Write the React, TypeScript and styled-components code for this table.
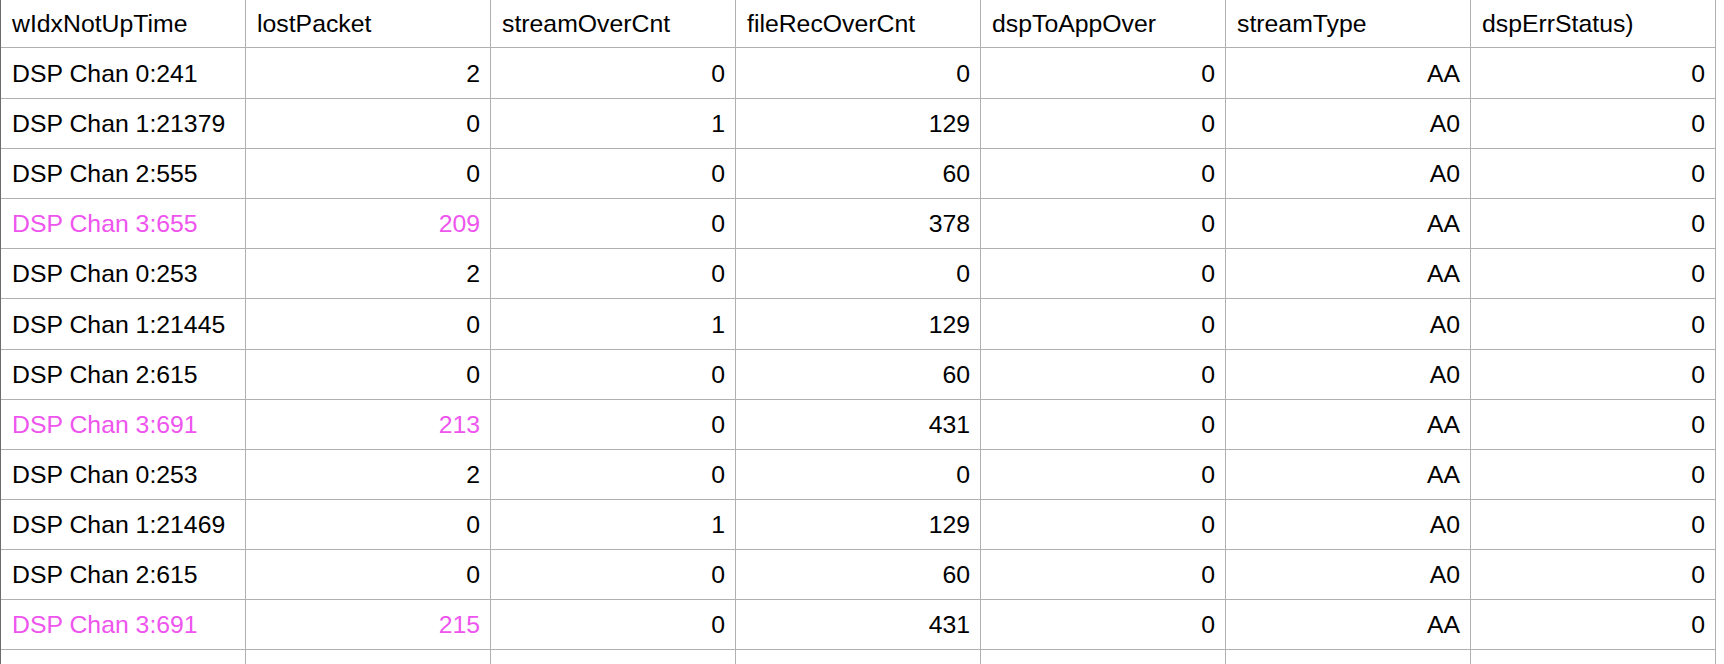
import React from "react";
import styled, { createGlobalStyle } from "styled-components";

const Global = createGlobalStyle`
  html, body { margin: 0; padding: 0; background: #fff; }
  body { font-family: "Liberation Sans", Arial, Helvetica, sans-serif; overflow: hidden; }
`;

const Sheet = styled.div`
  width: 1724px;
  height: 664px;
  overflow: hidden;
  border-left: 1px solid #6b6b6b;
  box-sizing: border-box;
  display: flex;
  flex-direction: column;
`;

const Row = styled.div<{ $h: number }>`
  display: grid;
  grid-template-columns: repeat(7, 245px) 1fr;
  height: ${(p) => p.$h}px;
  flex: none;
`;

const Cell = styled.div<{ $align?: "left" | "right"; $pink?: boolean; $last?: boolean; $noBottom?: boolean }>`
  box-sizing: border-box;
  border-right: ${(p) => (p.$last ? "none" : "1px solid #b0b0b0")};
  border-bottom: ${(p) => (p.$noBottom || p.$last ? "none" : "1px solid #b0b0b0")};
  padding: 1px 10px 0 11px;
  display: flex;
  align-items: center;
  justify-content: ${(p) => (p.$align === "right" ? "flex-end" : "flex-start")};
  font-size: 24.8px;
  color: ${(p) => (p.$pink ? "#ee55ee" : "#000")};
  white-space: nowrap;
  overflow: hidden;
`;

const headers = [
  "wIdxNotUpTime",
  "lostPacket",
  "streamOverCnt",
  "fileRecOverCnt",
  "dspToAppOver",
  "streamType",
  "dspErrStatus)",
];

type Rec = { name: string; lost: string; so: string; fr: string; da: string; st: string; err: string; pink?: boolean };

const data: Rec[] = [
  { name: "DSP Chan 0:241", lost: "2", so: "0", fr: "0", da: "0", st: "AA", err: "0" },
  { name: "DSP Chan 1:21379", lost: "0", so: "1", fr: "129", da: "0", st: "A0", err: "0" },
  { name: "DSP Chan 2:555", lost: "0", so: "0", fr: "60", da: "0", st: "A0", err: "0" },
  { name: "DSP Chan 3:655", lost: "209", so: "0", fr: "378", da: "0", st: "AA", err: "0", pink: true },
  { name: "DSP Chan 0:253", lost: "2", so: "0", fr: "0", da: "0", st: "AA", err: "0" },
  { name: "DSP Chan 1:21445", lost: "0", so: "1", fr: "129", da: "0", st: "A0", err: "0" },
  { name: "DSP Chan 2:615", lost: "0", so: "0", fr: "60", da: "0", st: "A0", err: "0" },
  { name: "DSP Chan 3:691", lost: "213", so: "0", fr: "431", da: "0", st: "AA", err: "0", pink: true },
  { name: "DSP Chan 0:253", lost: "2", so: "0", fr: "0", da: "0", st: "AA", err: "0" },
  { name: "DSP Chan 1:21469", lost: "0", so: "1", fr: "129", da: "0", st: "A0", err: "0" },
  { name: "DSP Chan 2:615", lost: "0", so: "0", fr: "60", da: "0", st: "A0", err: "0" },
  { name: "DSP Chan 3:691", lost: "215", so: "0", fr: "431", da: "0", st: "AA", err: "0", pink: true },
];

const heights = [51, 50, 50, 50, 50, 51, 50, 50, 50, 50, 50, 50];

export default function App() {
  return (
    <>
      <Global />
      <Sheet>
        <Row $h={48}>
          {headers.map((h) => (
            <Cell key={h}>{h}</Cell>
          ))}
          <Cell $last />
        </Row>
        {data.map((r, i) => (
          <Row key={i} $h={heights[i]}>
            <Cell $pink={r.pink}>{r.name}</Cell>
            <Cell $align="right" $pink={r.pink}>{r.lost}</Cell>
            <Cell $align="right">{r.so}</Cell>
            <Cell $align="right">{r.fr}</Cell>
            <Cell $align="right">{r.da}</Cell>
            <Cell $align="right">{r.st}</Cell>
            <Cell $align="right">{r.err}</Cell>
            <Cell $last />
          </Row>
        ))}
        <Row $h={40}>
          {Array.from({ length: 7 }).map((_, i) => (
            <Cell key={i} $noBottom />
          ))}
          <Cell $last />
        </Row>
      </Sheet>
    </>
  );
}
